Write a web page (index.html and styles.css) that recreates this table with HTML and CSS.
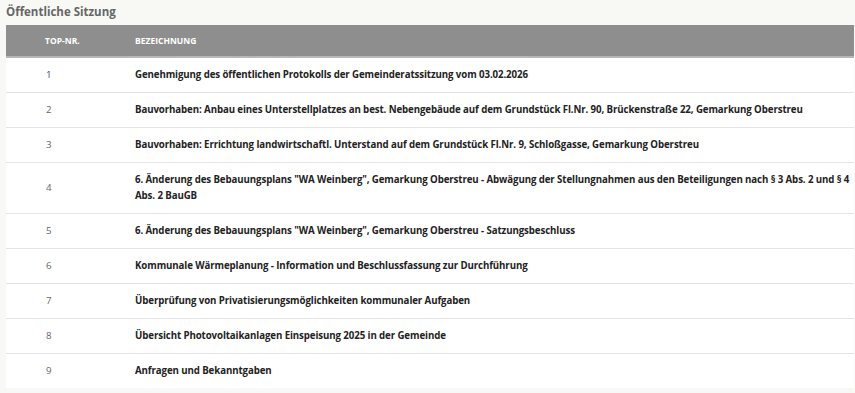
FILE: index.html
```html
<!DOCTYPE html>
<html lang="de">
<head>
<meta charset="utf-8">
<title>Öffentliche Sitzung</title>
<link rel="stylesheet" href="styles.css">
</head>
<body>
<div class="page">
  <h2 class="title">Öffentliche Sitzung</h2>
  <table class="agenda">
    <thead>
      <tr><th class="col-nr">TOP-NR.</th><th class="col-text">BEZEICHNUNG</th></tr>
    </thead>
    <tbody>
      <tr><td class="nr nr-first">1</td><td class="text">Genehmigung des öffentlichen Protokolls der Gemeinderatssitzung vom 03.02.2026</td></tr>
      <tr><td class="nr">2</td><td class="text">Bauvorhaben: Anbau eines Unterstellplatzes an best. Nebengebäude auf dem Grundstück Fl.Nr. 90, Brückenstraße 22, Gemarkung Oberstreu</td></tr>
      <tr><td class="nr">3</td><td class="text">Bauvorhaben: Errichtung landwirtschaftl. Unterstand auf dem Grundstück Fl.Nr. 9, Schloßgasse, Gemarkung Oberstreu</td></tr>
      <tr><td class="nr">4</td><td class="text">6. Änderung des Bebauungsplans "WA Weinberg", Gemarkung Oberstreu - Abwägung der Stellungnahmen aus den Beteiligungen nach § 3 Abs. 2 und § 4 Abs. 2 BauGB</td></tr>
      <tr><td class="nr">5</td><td class="text">6. Änderung des Bebauungsplans "WA Weinberg", Gemarkung Oberstreu - Satzungsbeschluss</td></tr>
      <tr><td class="nr">6</td><td class="text">Kommunale Wärmeplanung - Information und Beschlussfassung zur Durchführung</td></tr>
      <tr><td class="nr">7</td><td class="text">Überprüfung von Privatisierungsmöglichkeiten kommunaler Aufgaben</td></tr>
      <tr><td class="nr">8</td><td class="text">Übersicht Photovoltaikanlagen Einspeisung 2025 in der Gemeinde</td></tr>
      <tr><td class="nr">9</td><td class="text">Anfragen und Bekanntgaben</td></tr>
    </tbody>
  </table>
</div>
</body>
</html>
```
FILE: styles.css
```css
html, body {
  margin: 0;
  padding: 0;
  background: #f8f8f4;
}
body {
  font-family: "Open Sans", "Noto Sans", sans-serif;
  color: #222;
}
.page {
  padding: 4px 1px 0 6px;
}
.title {
  margin: 0 0 5px 0;
  font-size: 11.5px;
  font-weight: 700;
  color: #666;
  line-height: 16px;
}
.agenda {
  width: 100%;
  border-collapse: collapse;
  table-layout: fixed;
  background: #fff;
}
.agenda thead th {
  background: #8e8e8e;
  color: #fff;
  font-size: 8.5px;
  font-weight: 700;
  text-align: left;
  height: 31px;
  padding: 0;
  border-bottom: 2px solid #b8b8b8;
}
.agenda .col-nr {
  width: 90px;
  padding-left: 39px;
}
.agenda td {
  padding: 9px 0;
  line-height: 16px;
  font-size: 9.7px;
  border-bottom: 1px solid #e3e3ea;
  vertical-align: middle;
}
.agenda tbody tr:last-child td {
  border-bottom: none;
}
.agenda .nr {
  padding-left: 40px;
  color: #666;
  font-weight: 400;
}
.agenda .nr-first {
  color: #44447a;
}
.agenda .text {
  font-weight: 700;
  color: #222;
  letter-spacing: -0.1px;
  padding-right: 0;
}
```
